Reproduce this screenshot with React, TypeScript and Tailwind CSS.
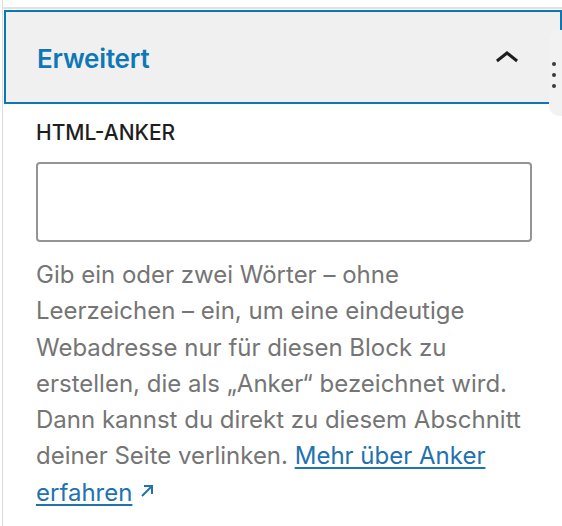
import { useState } from 'react';

const font = { fontFamily: 'Inter, "Noto Sans", Roboto, sans-serif' };

function ChevronUp() {
  return (
    <svg width="48" height="48" viewBox="0 0 24 24" className="shrink-0">
      <path d="M6.5 12.4L12 8l5.5 4.4-.9 1.2L12 10l-4.6 3.6-.9-1.2z" fill="#1e1e1e" />
    </svg>
  );
}

function ExternalArrow() {
  return (
    <svg width="18" height="18" viewBox="0 0 18 18" className="inline-block ml-[6px] -mt-[6px] align-middle">
      <path d="M4 14L14 4M6 4h8v8" fill="none" stroke="#2271b1" strokeWidth="2" />
    </svg>
  );
}

export default function App() {
  const [anchor, setAnchor] = useState('');

  return (
    <div className="relative h-[526px] w-[562px] overflow-hidden bg-white pl-[2px]" style={font}>
      <div className="h-full border-l border-[#dcdcdc] pt-[7px]">
        <div className="border-t-2 border-[#e2e2e2]">
          {/* Panel header, focused */}
          <div className="pl-px pt-px">
            <button className="flex h-[94px] w-full items-center justify-between border-2 border-[#0b77b5] bg-[#f0f0f0] pl-[31px] pr-[29px] pt-[3px] text-left">
              <span className="text-[26px] font-semibold leading-none tracking-[-0.2px] text-[#0e77b6]">Erweitert</span>
              <ChevronUp />
            </button>
          </div>

          {/* Panel body */}
          <div className="pl-[33px] pr-[30px] pt-[16px]">
            <label className="block text-[21px] font-medium uppercase leading-[26px] text-[#1e1e1e]">
              HTML-Anker
            </label>
            <input
              value={anchor}
              onChange={(e) => setAnchor(e.target.value)}
              className="mt-[16px] block h-[80px] w-full rounded-[4px] border-2 border-[#949494] bg-white px-4 text-[24px] outline-none"
            />
            <p className="mt-[15px] text-[24px] leading-[36.3px] text-[#757575]">
              Gib ein oder zwei Wörter – ohne<br />
              Leerzeichen – ein, um eine eindeutige<br />
              Webadresse nur für diesen Block zu<br />
              erstellen, die als „Anker“ bezeichnet wird.<br />
              Dann kannst du direkt zu diesem Abschnitt<br />
              deiner Seite verlinken.{' '}
              <a href="#" className="text-[#2271b1] underline underline-offset-[3px] decoration-2">
                Mehr über Anker<br />
                erfahren
              </a>
              <ExternalArrow />
            </p>
          </div>
        </div>
      </div>

      {/* Block toolbar overflow peeking in from the right */}
      <div className="absolute left-[549px] top-[30px] flex h-[86px] w-[20px] flex-col items-start gap-[7px] rounded-l-[10px] bg-[#f2f2f2] pl-[3px] pt-[32px]">
        <span className="h-[4px] w-[4px] rounded-full bg-[#3a3a3a]" />
        <span className="h-[4px] w-[4px] rounded-full bg-[#3a3a3a]" />
        <span className="h-[4px] w-[4px] rounded-full bg-[#3a3a3a]" />
      </div>
    </div>
  );
}
